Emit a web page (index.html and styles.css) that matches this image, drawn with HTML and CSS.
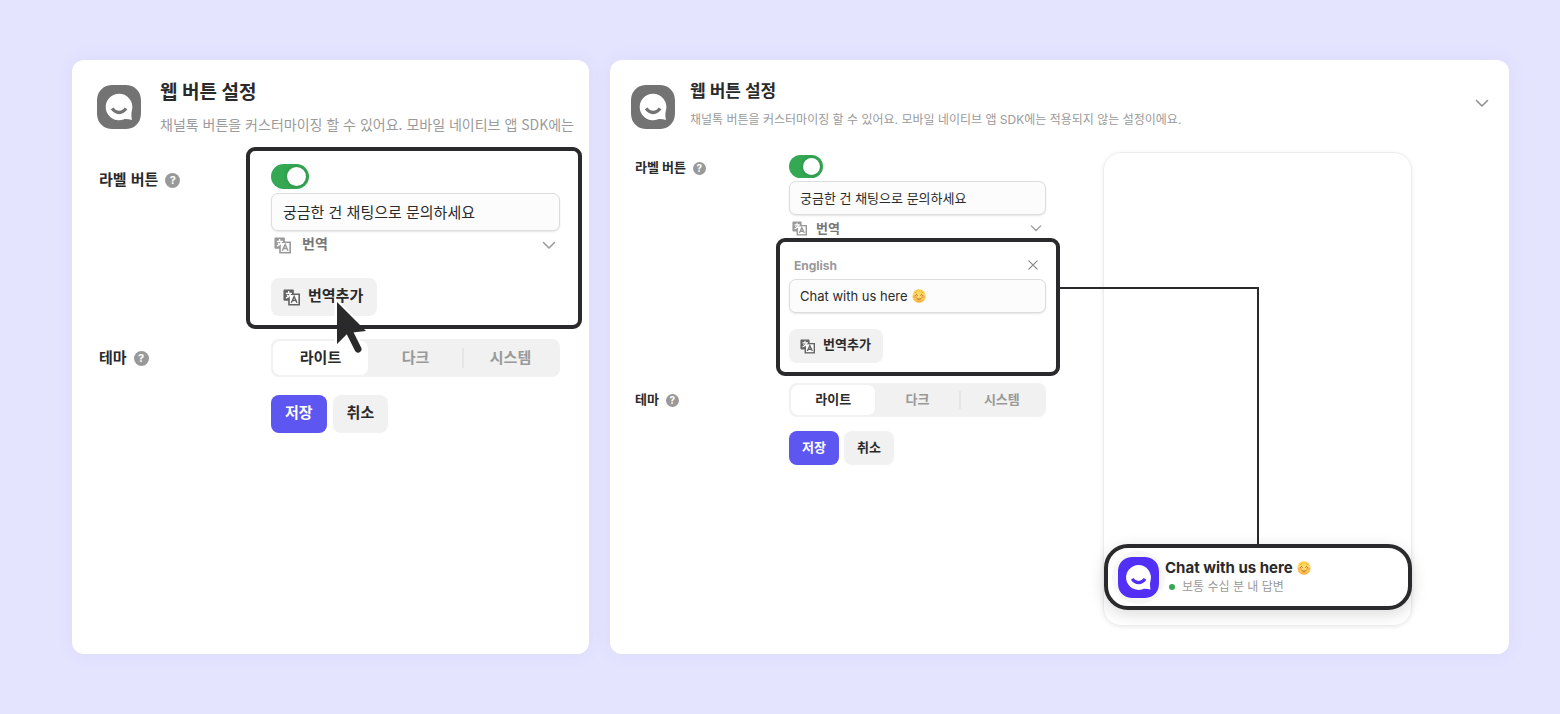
FILE: index.html
```html
<!DOCTYPE html>
<html lang="ko">
<head>
  <meta charset="UTF-8">
  <meta name="viewport" content="width=device-width, initial-scale=1.0">
  <title>웹 버튼 설정</title>
  <link rel="stylesheet" href="styles.css">
</head>
<body>

  <!-- Shared icons -->
  <svg class="sprite" aria-hidden="true">
    <symbol id="logo" viewBox="0 0 44 44">
      <path fill="currentColor" d="M17 0h10c6 0 9.500 1.200 12.500 4.300C42.700 7.400 44 11 44 17v10c0 6-1.300 9.600-4.500 12.700C36.500 42.800 33 44 27 44H17c-6 0-9.500-1.200-12.500-4.300C1.300 36.600 0 33 0 27V17C0 11 1.300 7.400 4.500 4.300 7.500 1.200 11 0 17 0z"/>
      <path fill="#fff" d="M22 8.700A13.300 13.300 0 1 0 26.500 34.500C29 33.600 32 34.500 34.900 34.900C34.400 31.500 34 29 34.900 25.500A13.300 13.300 0 0 0 22 8.700z"/>
      <path fill="none" stroke="currentColor" stroke-width="3.400" d="M15.200 23.400c3.600 5.400 10.200 5.400 13.800 0"/>
    </symbol>
    <symbol id="translate" viewBox="0 0 18 18">
      <path fill="currentColor" d="M1.500.500h9a1 1 0 0 1 1 1v3.200H18V17.500H5.500v-5h-4a1 1 0 0 1-1-1v-10a1 1 0 0 1 1-1z"/>
      <path fill="none" stroke="#fff" stroke-width="1.300" d="M6 2v2.200M3 4.600h6.500M8 4.800C7.400 7 5.600 8.600 3 9.600M4.200 6.200c.6 1 1.300 1.600 2.300 2.200"/>
      <path fill="#fff" d="M7.200 6.400h9.100v9.400H7.200z"/>
      <path fill="none" stroke="currentColor" stroke-width="1.600" d="M8.800 14.500l3-6.500 3 6.500M10 12.300h3.600"/>
    </symbol>
    <symbol id="chevron" viewBox="0 0 14 14">
      <path fill="none" stroke="currentColor" stroke-width="1.500" stroke-linecap="round" stroke-linejoin="round" d="M1.500 4.500L7 10l5.500-5.500"/>
    </symbol>
    <symbol id="close" viewBox="0 0 14 14">
      <path fill="none" stroke="currentColor" stroke-width="1.200" stroke-linecap="round" d="M2.800 2.800l8.400 8.400M11.200 2.800l-8.400 8.400"/>
    </symbol>
    <symbol id="smile" viewBox="0 0 16 16">
      <circle cx="8" cy="8" r="7.700" fill="url(#face)"/>
      <ellipse cx="3.300" cy="8.900" rx="2.200" ry="1.700" fill="#f8923c" opacity=".6"/>
      <ellipse cx="12.700" cy="8.900" rx="2.200" ry="1.700" fill="#f8923c" opacity=".6"/>
      <path fill="none" stroke="#a4631a" stroke-linecap="round" d="M3.900 7.200c.5-1.200 1.900-1.200 2.400 0M9.700 7.200c.5-1.200 1.900-1.200 2.400 0M5.500 10.600c1.500 1.700 3.500 1.700 5 0"/>
      <path fill="none" stroke="#c98a2a" stroke-width=".6" stroke-linecap="round" d="M3.500 4.300l1.700-.9M12.500 4.300l-1.700-.9"/>
    </symbol>
    <linearGradient id="face" x1="0" y1="0" x2="0" y2="1">
      <stop offset="0" stop-color="#ffc93a"/>
      <stop offset=".5" stop-color="#ffe07a"/>
      <stop offset="1" stop-color="#f9a72f"/>
    </linearGradient>
  </svg>

  <main class="stage">

    <!-- Before: adding a translation -->
    <section class="panel panel-large">
      <header class="panel-header">
        <svg class="logo"><use href="#logo"/></svg>
        <div class="heading">
          <h2>웹 버튼 설정</h2>
          <p>채널톡 버튼을 커스터마이징 할 수 있어요. 모바일 네이티브 앱 SDK에는</p>
        </div>
      </header>

      <div class="panel-body">
        <form class="settings">
          <div class="row-label">
            <label for="label-toggle-1">라벨 버튼</label>
            <span class="help">?</span>
          </div>
          <div class="group framed">
            <input class="toggle" type="checkbox" id="label-toggle-1" checked>
            <input class="field" type="text" aria-label="라벨 버튼 문구" value="궁금한 건 채팅으로 문의하세요">
            <button type="button" class="translations">
              <svg class="icon"><use href="#translate"/></svg>
              <span>번역</span>
              <svg class="chevron"><use href="#chevron"/></svg>
            </button>
            <button type="button" class="button add">
              <svg class="icon"><use href="#translate"/></svg>
              <span>번역추가</span>
              <svg class="cursor" viewBox="0 0 40 60">
                <g fill="#fff" stroke="#fff" stroke-width="5">
                  <path d="M7 6v41l10-10 18-3z"/>
                  <path stroke-width="12" stroke-linecap="round" d="M18 34l10 18"/>
                </g>
                <path fill="#2a2a2a" d="M7 5v42l11-11 18-2z"/>
                <path stroke="#2a2a2a" stroke-width="7" stroke-linecap="round" d="M18 32l10 20"/>
              </svg>
            </button>
          </div>

          <div class="row-label theme-label">
            <span id="theme-1">테마</span>
            <span class="help">?</span>
          </div>
          <div class="segments" role="radiogroup" aria-labelledby="theme-1">
            <label><input type="radio" name="theme" checked><span>라이트</span></label>
            <label><input type="radio" name="theme"><span>다크</span></label>
            <label><input type="radio" name="theme"><span>시스템</span></label>
          </div>

          <div class="actions">
            <button type="button" class="button primary">저장</button>
            <button type="button" class="button">취소</button>
          </div>
        </form>
      </div>
    </section>

    <!-- After: translation added, with preview -->
    <section class="panel">
      <header class="panel-header">
        <svg class="logo"><use href="#logo"/></svg>
        <div class="heading">
          <h2>웹 버튼 설정</h2>
          <p>채널톡 버튼을 커스터마이징 할 수 있어요. 모바일 네이티브 앱 SDK에는 적용되지 않는 설정이에요.</p>
        </div>
        <button type="button" class="collapse" aria-label="접기">
          <svg><use href="#chevron"/></svg>
        </button>
      </header>

      <div class="panel-body">
        <form class="settings">
          <div class="row-label">
            <label for="label-toggle-2">라벨 버튼</label>
            <span class="help">?</span>
          </div>
          <div class="group">
            <input class="toggle" type="checkbox" id="label-toggle-2" checked>
            <input class="field" type="text" aria-label="라벨 버튼 문구" value="궁금한 건 채팅으로 문의하세요">
            <button type="button" class="translations">
              <svg class="icon"><use href="#translate"/></svg>
              <span>번역</span>
              <svg class="chevron"><use href="#chevron"/></svg>
            </button>
            <div class="language framed">
              <div class="language-head">
                <label for="english">English</label>
                <button type="button" class="remove" aria-label="삭제">
                  <svg><use href="#close"/></svg>
                </button>
              </div>
              <div class="field field-emoji">
                <input type="text" id="english" value="Chat with us here">
                <svg class="emoji"><use href="#smile"/></svg>
              </div>
              <button type="button" class="button add">
                <svg class="icon"><use href="#translate"/></svg>
                <span>번역추가</span>
              </button>
            </div>
          </div>

          <div class="row-label theme-label">
            <span id="theme-2">테마</span>
            <span class="help">?</span>
          </div>
          <div class="segments" role="radiogroup" aria-labelledby="theme-2">
            <label><input type="radio" name="theme" checked><span>라이트</span></label>
            <label><input type="radio" name="theme"><span>다크</span></label>
            <label><input type="radio" name="theme"><span>시스템</span></label>
          </div>

          <div class="actions">
            <button type="button" class="button primary">저장</button>
            <button type="button" class="button">취소</button>
          </div>
        </form>

        <div class="preview">
          <div class="connector"></div>
          <div class="launcher">
            <span class="launcher-logo"><svg><use href="#logo"/></svg></span>
            <div class="launcher-text">
              <strong>Chat with us here <svg class="emoji"><use href="#smile"/></svg></strong>
              <p class="status">보통 수십 분 내 답변</p>
            </div>
          </div>
        </div>
      </div>
    </section>

  </main>

</body>
</html>
```
FILE: styles.css
```css
* {
  box-sizing: border-box;
  margin: 0;
  padding: 0;
}

body {
  background: #e4e4ff;
  color: #2a2a2a;
  font-family: Inter, "Noto Sans CJK KR", sans-serif;
}

button,
input {
  font: inherit;
  color: inherit;
  border: none;
  background: none;
}

button {
  cursor: pointer;
}

.sprite {
  position: absolute;
  width: 0;
  height: 0;
}

.stage {
  display: grid;
  grid-template-columns: minmax(0, 517fr) minmax(0, 899fr);
  gap: 21px;
  min-height: 100vh;
  padding: 60px 51px 60px 72px;
}

/* Panels */
.panel {
  --text: 13px;
  --control: 34px;
  --label-column: 154px;
  --inset: 10px;
  padding: 20px 20px 28px 21px;
  background: #fff;
  border-radius: 12px;
  box-shadow: 0 0 20px rgba(90, 80, 220, 0.06);
}

.panel-large {
  --text: 15px;
  --control: 38px;
  --label-column: 172px;
  --inset: 11px;
  padding-left: 25px;
}

.panel-header {
  display: flex;
  align-items: flex-start;
}

.logo {
  flex: none;
  width: 44px;
  height: 44px;
  margin: 5px 15px 0 0;
  color: #737373;
}

.panel-large .logo {
  margin-right: 19px;
}

.heading {
  flex: 1;
  min-width: 0;
  white-space: nowrap;
}

.heading h2 {
  font-size: 17px;
  line-height: 22px;
}

.heading p {
  margin-top: 9px;
  font-size: 12px;
  line-height: 18px;
  color: #9a9a9a;
}

.panel-large .heading h2 {
  font-size: 19px;
  line-height: 26px;
}

.panel-large .heading p {
  margin-top: 9px;
  font-family: "Noto Sans CJK KR", sans-serif;
  font-size: 14px;
}

.collapse {
  margin-top: 16px;
  color: #8c8c8c;
}

.collapse svg {
  display: block;
  width: 14px;
  height: 14px;
}

/* Settings form */
.panel-body {
  display: flex;
  gap: 57px;
  margin-top: 23px;
  padding-left: 4px;
}

.panel-large .panel-body {
  margin-top: 31px;
  padding: 0 9px 0 2px;
}

.settings {
  display: grid;
  grid-template-columns: var(--label-column) minmax(0, 1fr);
  align-content: start;
  flex: 0 1 411px;
  margin-top: 3px;
  font-size: var(--text);
}

.panel-large .settings {
  flex: 1;
  margin-top: 0;
  font-family: "Noto Sans CJK KR", sans-serif;
}

.row-label {
  display: flex;
  align-items: center;
  gap: 7px;
  height: 26px;
  font-weight: 700;
}

.row-label > :first-child {
  padding-bottom: 4px;
}

.panel-large .row-label {
  height: 32px;
}

.row-label.theme-label {
  height: var(--control);
  margin-top: 20px;
}

.help {
  width: 13px;
  height: 13px;
  border-radius: 50%;
  background: #999;
  color: #fff;
  font-family: Inter, sans-serif;
  font-size: 10px;
  line-height: 13px;
  text-align: center;
}

.panel-large .help {
  width: 15px;
  height: 15px;
  font-size: 11px;
  line-height: 15px;
}

.toggle {
  appearance: none;
  display: block;
  width: 34px;
  height: 23px;
  margin-bottom: 3px;
  padding: 3px;
  border-radius: 13px;
  background: #999;
}

.toggle::before {
  content: "";
  display: block;
  width: 17px;
  height: 17px;
  border-radius: 50%;
  background: #fff;
}

.toggle:checked {
  background: #34a853;
}

.toggle:checked::before {
  margin-left: auto;
  box-shadow: 0 0 4px rgba(0, 0, 0, 0.2);
}

.panel-large .toggle {
  width: 38px;
  height: 25px;
  margin-bottom: 4px;
}

.panel-large .toggle::before {
  width: 19px;
  height: 19px;
}

.field {
  display: block;
  width: 100%;
  height: var(--control);
  padding: 0 var(--inset) 2px;
  border: 1px solid #ddd;
  border-radius: 7px;
  background: #fcfcfc;
  box-shadow: 0 1px 2px rgba(0, 0, 0, 0.1);
}

.field-emoji {
  display: flex;
  align-items: center;
  gap: 4px;
  padding-bottom: 0;
}

.field-emoji input {
  field-sizing: content;
}

.emoji {
  width: 14px;
  height: 14px;
}

.translations {
  display: flex;
  align-items: center;
  gap: 9px;
  width: 100%;
  height: 26px;
  padding: 0 4px 0 3px;
  font-size: 13px;
  font-weight: 700;
  color: #777;
  text-align: left;
}

.translations span {
  padding-bottom: 2px;
}

.panel-large .translations {
  gap: 11px;
  height: 28px;
  font-size: 14px;
}

.panel-large .translations span {
  padding-bottom: 4px;
}

.translations .icon {
  color: #999;
}

.translations .chevron {
  width: 12px;
  height: 12px;
  margin-left: auto;
  color: #999;
}

.panel-large .translations .chevron {
  width: 14px;
  height: 14px;
}

.icon {
  flex: none;
  width: 15px;
  height: 15px;
}

.panel-large .icon {
  width: 17px;
  height: 17px;
}

.button {
  height: var(--control);
  padding: 0 13px 3px;
  border-radius: 8px;
  background: #f1f1f1;
  font-weight: 700;
}

.panel-large .button {
  padding: 0 14px 5px;
}

.button.primary {
  background: #5e56f0;
  color: #fff;
}

.button.add {
  position: relative;
  display: flex;
  align-items: center;
  gap: 8px;
  margin-top: 16px;
  padding: 0 12px 0 11px;
}

.panel-large .button.add {
  margin-top: 19px;
  padding: 0 14px 0 12px;
}

.add span {
  padding-bottom: 5px;
}

.add .icon {
  color: #636363;
}

.cursor {
  position: absolute;
  top: 19px;
  left: 59px;
  z-index: 1;
  width: 40px;
  height: 60px;
  overflow: visible;
}

.language {
  margin-top: 12px;
}

.language-head {
  display: flex;
  align-items: center;
  justify-content: space-between;
  height: 26px;
  padding: 0 6px 2px 5px;
  font-size: 12px;
  font-weight: 700;
  color: #999;
}

.remove svg {
  display: block;
  width: 14px;
  height: 14px;
  color: #888;
}

/* Highlight frame around the part being explained */
.framed {
  position: relative;
}

.framed::after {
  content: "";
  position: absolute;
  inset: -15px -14px -13px -13px;
  z-index: 2;
  border: 4px solid #2a2a2d;
  border-radius: 9px;
  pointer-events: none;
}

.group.framed::after {
  inset: -17px -22px -13px -25px;
}

/* Theme switch */
.segments {
  display: grid;
  grid-template-columns: repeat(3, 1fr);
  height: var(--control);
  margin-top: 20px;
  padding: 2px;
  border-radius: 8px;
  background: #f1f1f1;
}

.panel-large .segments,
.panel-large .theme-label {
  margin-top: 23px;
}

.segments label {
  position: relative;
  display: flex;
}

.segments input {
  position: absolute;
  opacity: 0;
}

.segments span {
  flex: 1;
  display: flex;
  align-items: center;
  justify-content: center;
  padding-bottom: 4px;
  border-radius: 7px;
  font-weight: 700;
  color: #999;
}

.segments input:checked + span {
  background: #fff;
  color: #2a2a2a;
}

.segments label:last-child::before {
  content: "";
  position: absolute;
  top: 20%;
  bottom: 20%;
  left: -1px;
  width: 2px;
  background: #e5e5e5;
}

.actions {
  grid-column: 2;
  display: flex;
  gap: 5px;
  margin-top: 14px;
}

.panel-large .actions {
  gap: 6px;
  margin-top: 18px;
}

/* Preview */
.preview {
  position: relative;
  display: flex;
  flex-direction: column;
  justify-content: flex-end;
  flex: 0 1 309px;
  min-height: 474px;
  padding-bottom: 15px;
  border: 1px solid #ededed;
  border-radius: 18px;
  box-shadow: 0 1px 4px rgba(0, 0, 0, 0.08);
}

.connector {
  position: absolute;
  top: 134px;
  right: calc(50% - 1px);
  bottom: 79px;
  left: -44px;
  border: solid #2a2a2d;
  border-width: 2px 2px 0 0;
}

.launcher {
  position: relative;
  display: flex;
  align-items: center;
  height: 66px;
  margin-right: -1px;
  padding: 0 4px;
  border: 4px solid #2a2a2d;
  border-radius: 24px;
  background: #fff;
  box-shadow: 0 4px 16px rgba(0, 0, 0, 0.15);
}

.launcher-logo {
  flex: none;
  padding: 6px;
  border-radius: 50%;
  background: #f7f7f7;
  color: #512ff5;
}

.launcher-logo svg {
  display: block;
  width: 41px;
  height: 41px;
}

.launcher-text {
  padding-bottom: 1px;
}

.launcher strong {
  display: flex;
  align-items: center;
  gap: 4px;
  font-size: 15px;
  line-height: 20px;
}

.status {
  display: flex;
  align-items: center;
  gap: 7px;
  padding-left: 4px;
  font-size: 12px;
  line-height: 18px;
  color: #999;
}

.status::before {
  content: "";
  width: 6px;
  height: 6px;
  border-radius: 50%;
  background: #34a853;
}
```
